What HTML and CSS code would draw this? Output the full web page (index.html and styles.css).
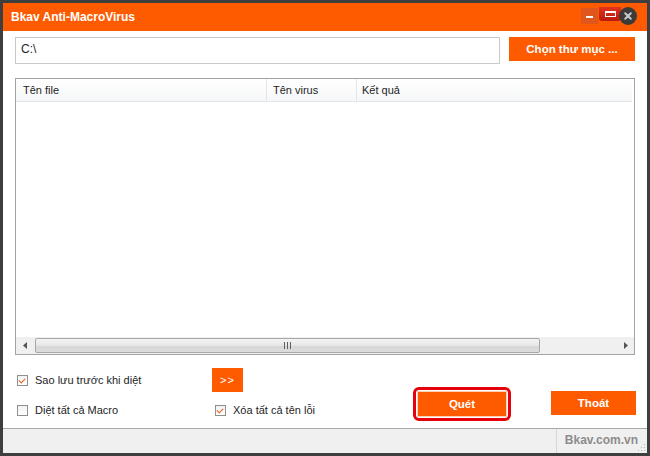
FILE: index.html
```html
<!DOCTYPE html>
<html lang="vi">
<head>
    <meta charset="utf-8">
    <title>Bkav Anti-MacroVirus</title>
    <link rel="stylesheet" href="styles.css">
</head>
<body>
    <div class="window">
        <div class="titlebar">
            <span class="title">Bkav Anti-MacroVirus</span>
            <div class="controls">
                <span class="w_min"><i></i></span>
                <span class="w_max"><i></i></span>
                <span class="w_close">
                    <svg width="16" height="16" viewBox="0 0 16 16"><path d="M5.2 5.2 L10.8 10.8 M10.8 5.2 L5.2 10.8" stroke="#c8c8c8" stroke-width="2" stroke-linecap="round"/></svg>
                </span>
            </div>
        </div>
        <div class="content">
            <div class="path_row">
                <div class="path_input">C:\</div>
                <a href="#none" class="btn btn_choose">Chọn thư mục ...</a>
            </div>
            <div class="list">
                <div class="list_head">
                    <div class="col col_file">Tên file</div>
                    <div class="col col_virus">Tên virus</div>
                    <div class="col col_result">Kết quả</div>
                </div>
                <div class="list_body"></div>
                <div class="hscroll">
                    <span class="arrow">
                        <svg width="5" height="7" viewBox="0 0 5 7"><path d="M4 0 L0 3.5 L4 7 Z" fill="#555"/></svg>
                    </span>
                    <div class="track">
                        <div class="thumb"><span class="grip"><i></i><i></i><i></i></span></div>
                    </div>
                    <span class="arrow arrow_r">
                        <svg width="5" height="7" viewBox="0 0 5 7"><path d="M1 0 L5 3.5 L1 7 Z" fill="#555"/></svg>
                    </span>
                </div>
            </div>
            <div class="options">
                <label class="chk r1 c1"><span class="box on"></span>Sao lưu trước khi diệt</label>
                <a href="#none" class="btn btn_more r1 c2">&gt;&gt;</a>
                <label class="chk r2 c1"><span class="box"></span>Diệt tất cả Macro</label>
                <label class="chk r2 c2 chk_del"><span class="box on"></span>Xóa tất cả tên lỗi</label>
                <div class="scan_ring"><a href="#none" class="btn btn_scan">Quét</a></div>
                <a href="#none" class="btn btn_exit">Thoát</a>
            </div>
        </div>
        <div class="statusbar">
            <div class="status_left"></div>
            <div class="status_site">Bkav.com.vn</div>
            <svg class="sizegrip" width="8" height="8" viewBox="0 0 8 8">
                <rect x="6" y="0" width="1" height="1" fill="#b5b5b5"/>
                <rect x="3" y="3" width="1" height="1" fill="#b5b5b5"/>
                <rect x="6" y="3" width="1" height="1" fill="#b5b5b5"/>
                <rect x="0" y="6" width="1" height="1" fill="#b5b5b5"/>
                <rect x="3" y="6" width="1" height="1" fill="#b5b5b5"/>
                <rect x="6" y="6" width="1" height="1" fill="#b5b5b5"/>
            </svg>
        </div>
    </div>
</body>
</html>
```

FILE: styles.css
```css
body {padding: 0px; margin: 0px; font-family: "Liberation Sans", Arial, sans-serif; font-size: 11px; color: #1e1e1e;}
a {text-decoration: none; color: inherit;}
/* =============================================================== */
.window {
    width: 650px;
    height: 456px;
    box-sizing: border-box;
    border: 3px solid #3e3e3e;
    display: flex;
    flex-direction: column;
    background-color: #fff;
}
.titlebar {
    height: 28px;
    flex: none;
    background-color: #fe5b00;
    display: flex;
    align-items: flex-start;
    justify-content: space-between;
    padding: 0px 10px 0px 8px;
}
.title {
    color: #fff;
    font-weight: bold;
    font-size: 12px;
    line-height: 29px;
}
.controls {
    display: flex;
    align-items: flex-start;
    padding-top: 4px;
}
.w_min {
    width: 17px;
    height: 16px;
    margin-top: 1px;
    background-color: #e0561c;
    display: flex;
    align-items: center;
    justify-content: center;
}
.w_min i {
    width: 7px;
    height: 2px;
    background-color: #fff;
    margin-top: 1px;
}
.w_max {
    width: 22px;
    height: 14px;
    margin-left: 1px;
    background: linear-gradient(#e2331d, #b91a0e);
    border-radius: 0px 0px 3px 3px;
    display: flex;
    align-items: center;
    justify-content: center;
}
.w_max i {
    width: 11px;
    height: 6px;
    box-sizing: border-box;
    border: 1px solid #fff;
    border-top-width: 2px;
}
.w_close {
    width: 18px;
    height: 18px;
    margin-left: -2px;
    border-radius: 50%;
    background-color: #3b3b3b;
    display: flex;
    align-items: center;
    justify-content: center;
}
/* =============================================================== */
.content {
    flex: 1;
    padding: 6px 12px 0px;
    display: flex;
    flex-direction: column;
}
.path_row {
    display: flex;
    gap: 9px;
    align-items: flex-start;
}
.path_input {
    width: 485px;
    height: 27px;
    box-sizing: border-box;
    border: 1px solid #c9c9c9;
    padding: 4px 5px;
    font-size: 12px;
}
.btn {
    display: flex;
    align-items: center;
    justify-content: center;
    background-color: #fe5b00;
    color: #fff;
    font-weight: bold;
    font-size: 11.5px;
    box-sizing: border-box;
}
.btn_choose {
    width: 126px;
    height: 24px;
}
/* =============================================================== */
.list {
    margin-top: 14px;
    height: 277px;
    box-sizing: border-box;
    border: 1px solid #a3a3a3;
    display: flex;
    flex-direction: column;
}
.list_head {
    height: 23px;
    flex: none;
    box-sizing: border-box;
    display: flex;
    background: linear-gradient(#ffffff, #f6f7f8);
    border-bottom: 1px solid #e3e5e7;
    margin-right: 2px;
}
.col {
    line-height: 23px;
    border-right: 1px solid #e4e5e7;
    box-sizing: border-box;
}
.col_file {
    width: 251px;
    padding-left: 7px;
}
.col_virus {
    width: 90px;
    padding-left: 6px;
}
.col_result {
    flex: 1;
    padding-left: 5px;
    border-right: none;
}
.list_body {
    flex: 1;
}
.hscroll {
    height: 17px;
    flex: none;
    display: flex;
    background-color: #f0f0f0;
}
.arrow {
    width: 19px;
    display: flex;
    align-items: center;
    justify-content: center;
}
.arrow_r {
    width: 17px;
}
.track {
    flex: 1;
    display: flex;
    padding: 1px 0px;
}
.thumb {
    width: 505px;
    box-sizing: border-box;
    border: 1px solid #a7a7a7;
    border-radius: 2px;
    background: linear-gradient(#f4f4f4, #e6e6e6 50%, #d6d6d6 51%, #dcdcdc);
    display: flex;
    align-items: center;
    justify-content: center;
}
.grip {
    display: flex;
    gap: 2px;
}
.grip i {
    width: 1px;
    height: 7px;
    background-color: #606060;
}
/* =============================================================== */
.options {
    margin-top: 13px;
    padding-left: 2px;
    display: grid;
    grid-template-columns: 195px 201px 138px 85px;
    grid-template-rows: 24px 36px;
    align-items: center;
}
.r1 {grid-row: 1;}
.r2 {grid-row: 2;}
.c1 {grid-column: 1;}
.c2 {grid-column: 2;}
.chk {
    display: flex;
    align-items: center;
    gap: 7px;
    font-size: 11px;
}
.chk_del {
    padding-left: 3px;
}
.box {
    width: 11px;
    height: 11px;
    box-sizing: border-box;
    border: 1px solid #8f8f8f;
    background: linear-gradient(#f2f2f2, #ffffff);
    position: relative;
}
.box.on::after {
    content: "";
    position: absolute;
    left: 2px;
    top: 1px;
    width: 3px;
    height: 5px;
    border: solid #e2621f;
    border-width: 0px 1.5px 1.5px 0px;
    transform: rotate(45deg);
}
.btn_more {
    width: 31px;
    height: 24px;
    font-weight: normal;
    font-size: 11px;
    letter-spacing: 1px;
}
.scan_ring {
    grid-column: 3;
    grid-row: 1 / 3;
    align-self: start;
    justify-self: start;
    margin-top: 19px;
    border: 3px solid #e5000d;
    border-radius: 6px;
    padding: 1px;
}
.btn_scan {
    width: 90px;
    height: 26px;
    border: 1px solid #ffd0b3;
}
.btn_exit {
    grid-column: 4;
    grid-row: 1 / 3;
    align-self: start;
    margin-top: 23px;
    width: 85px;
    height: 24px;
}
/* =============================================================== */
.statusbar {
    height: 25px;
    flex: none;
    box-sizing: border-box;
    border-top: 1px solid #a9a9a9;
    background-color: #f0f0f0;
    display: flex;
    position: relative;
}
.status_left {
    width: 553px;
    border-right: 1px solid #d7d7d7;
}
.status_site {
    flex: 1;
    text-align: right;
    padding-right: 9px;
    line-height: 22px;
    font-weight: bold;
    font-size: 12px;
    color: #8c8c8c;
}
.sizegrip {
    position: absolute;
    right: 1px;
    bottom: 1px;
}
```
